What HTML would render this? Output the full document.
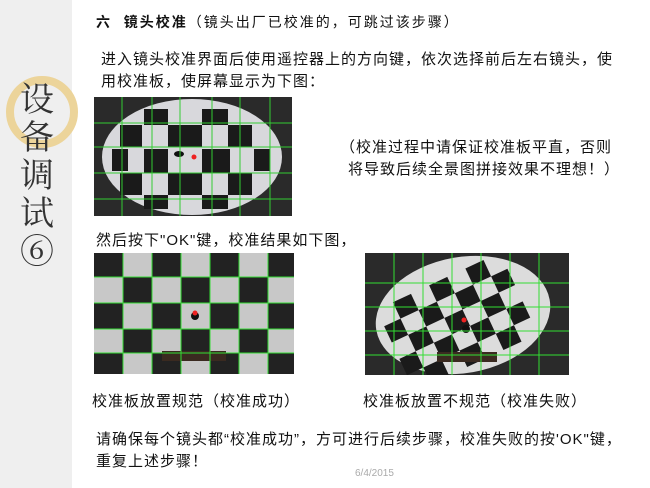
<!DOCTYPE html>
<html><head><meta charset="utf-8"><style>
body{margin:0;width:650px;height:488px;background:#fff;position:relative;overflow:hidden;font-family:"Liberation Sans","Noto Sans CJK SC",sans-serif;color:#111}
.side{position:absolute;left:0;top:0;width:72px;height:488px;background:#efefef}
.t{position:absolute;white-space:nowrap;font-size:15px;line-height:22px;letter-spacing:1px}
.v{position:absolute;left:17px;top:82px;width:40px;font-family:"Liberation Serif","Noto Serif CJK SC",serif;font-size:34px;line-height:38px;color:#333;text-align:center}
</style></head><body>
<div class="side"></div>
<svg style="position:absolute;left:0;top:0" width="80" height="160"><circle cx="42" cy="112" r="32" fill="none" stroke="#ecd49a" stroke-width="8"/></svg>
<div class="v">设<br>备<br>调<br>试<br>⑥</div>
<div class="t" style="left:96px;top:11px;font-size:14px;letter-spacing:2px"><b>六&nbsp; 镜头校准</b>（镜头出厂已校准的，可跳过该步骤）</div>
<div class="t" style="left:101px;top:49px">进入镜头校准界面后使用遥控器上的方向键，依次选择前后左右镜头，使</div>
<div class="t" style="left:101px;top:71px">用校准板，使屏幕显示为下图：</div>
<svg style="position:absolute;left:94px;top:97px" width="198" height="119">
<rect width="198" height="119" fill="#2a2a2a"/>
<ellipse cx="98" cy="60" rx="90" ry="58" fill="#d8d8dc"/>
<g fill="#1a1a1a">
<rect x="50" y="12" width="24" height="16"/><rect x="108" y="12" width="26" height="16"/>
<rect x="26" y="28" width="22" height="22"/><rect x="74" y="28" width="34" height="22"/><rect x="134" y="28" width="24" height="22"/>
<rect x="50" y="52" width="24" height="24"/><rect x="108" y="52" width="28" height="24"/><rect x="18" y="52" width="16" height="22"/><rect x="160" y="52" width="16" height="22"/>
<rect x="26" y="76" width="22" height="22"/><rect x="74" y="76" width="34" height="22"/><rect x="134" y="76" width="24" height="22"/>
<rect x="50" y="98" width="24" height="14"/><rect x="108" y="98" width="26" height="14"/>
</g>
<ellipse cx="85" cy="57" rx="5" ry="3" fill="#111"/><circle cx="100" cy="60" r="2.5" fill="#e22"/>
<g stroke="#3c3" stroke-width="1"><line x1="0" y1="26" x2="198" y2="26"/><line x1="0" y1="50" x2="198" y2="50"/><line x1="0" y1="76" x2="198" y2="76"/><line x1="0" y1="102" x2="198" y2="102"/>
<line x1="28" y1="0" x2="28" y2="119"/><line x1="58" y1="0" x2="58" y2="119"/><line x1="86" y1="0" x2="86" y2="119"/><line x1="118" y1="0" x2="118" y2="119"/><line x1="146" y1="0" x2="146" y2="119"/><line x1="176" y1="0" x2="176" y2="119"/></g></svg>
<div class="t" style="left:340px;top:137px">（校准过程中请保证校准板平直，否则</div>
<div class="t" style="left:348px;top:159px">将导致后续全景图拼接效果不理想！）</div>
<div class="t" style="left:96px;top:230px">然后按下"OK"键，校准结果如下图，</div>
<svg style="position:absolute;left:94px;top:253px" width="200" height="121">
<rect width="200" height="121" fill="#c8c8c8"/>
<g fill="#222">
<rect x="0" y="0" width="29" height="24"/><rect x="58" y="0" width="29" height="24"/><rect x="116" y="0" width="29" height="24"/><rect x="174" y="0" width="26" height="24"/>
<rect x="29" y="24" width="29" height="26"/><rect x="87" y="24" width="29" height="26"/><rect x="145" y="24" width="29" height="26"/>
<rect x="0" y="50" width="29" height="26"/><rect x="58" y="50" width="29" height="26"/><rect x="116" y="50" width="29" height="26"/><rect x="174" y="50" width="26" height="26"/>
<rect x="29" y="76" width="29" height="24"/><rect x="87" y="76" width="29" height="24"/><rect x="145" y="76" width="29" height="24"/>
<rect x="0" y="100" width="29" height="21"/><rect x="58" y="100" width="29" height="21"/><rect x="116" y="100" width="29" height="21"/><rect x="174" y="100" width="26" height="21"/>
</g>
<rect x="68" y="98" width="64" height="10" fill="#3a2a20"/>
<circle cx="101" cy="63" r="4" fill="#111"/><circle cx="101" cy="60" r="2.5" fill="#e22"/>
<g stroke="#3d3" stroke-width="1"><line x1="0" y1="24" x2="200" y2="24"/><line x1="0" y1="50" x2="200" y2="50"/><line x1="0" y1="76" x2="200" y2="76"/><line x1="0" y1="100" x2="200" y2="100"/>
<line x1="29" y1="0" x2="29" y2="121"/><line x1="58" y1="0" x2="58" y2="121"/><line x1="87" y1="0" x2="87" y2="121"/><line x1="116" y1="0" x2="116" y2="121"/><line x1="145" y1="0" x2="145" y2="121"/><line x1="174" y1="0" x2="174" y2="121"/></g></svg>
<svg style="position:absolute;left:365px;top:253px" width="204" height="122">
<rect width="204" height="122" fill="#2a2a2a"/>
<ellipse cx="98" cy="62" rx="88" ry="58" transform="rotate(-10 98 62)" fill="#dcdcdc"/>
<g fill="#1a1a1a" transform="rotate(-25 100 62)">
<rect x="40" y="20" width="20" height="18"/><rect x="80" y="20" width="20" height="18"/><rect x="120" y="20" width="20" height="18"/>
<rect x="60" y="38" width="20" height="18"/><rect x="100" y="38" width="20" height="18"/><rect x="140" y="38" width="18" height="18"/><rect x="22" y="38" width="18" height="18"/>
<rect x="40" y="56" width="20" height="18"/><rect x="80" y="56" width="20" height="18"/><rect x="120" y="56" width="20" height="18"/>
<rect x="60" y="74" width="20" height="18"/><rect x="100" y="74" width="20" height="18"/><rect x="22" y="74" width="18" height="18"/><rect x="140" y="74" width="18" height="18"/>
<rect x="40" y="92" width="20" height="18"/><rect x="80" y="92" width="20" height="18"/><rect x="120" y="92" width="20" height="18"/>
</g>
<rect x="72" y="99" width="60" height="10" fill="#3a2a20"/>
<circle cx="101" cy="76" r="4" fill="#111"/><circle cx="99" cy="67" r="2.5" fill="#e22"/>
<g stroke="#3d3" stroke-width="1"><line x1="0" y1="30" x2="204" y2="30"/><line x1="0" y1="54" x2="204" y2="54"/><line x1="0" y1="78" x2="204" y2="78"/><line x1="0" y1="102" x2="204" y2="102"/>
<line x1="29" y1="0" x2="29" y2="122"/><line x1="58" y1="0" x2="58" y2="122"/><line x1="87" y1="0" x2="87" y2="122"/><line x1="116" y1="0" x2="116" y2="122"/><line x1="145" y1="0" x2="145" y2="122"/><line x1="174" y1="0" x2="174" y2="122"/></g></svg>
<div class="t" style="left:92px;top:391px">校准板放置规范（校准成功）</div>
<div class="t" style="left:363px;top:391px">校准板放置不规范（校准失败）</div>
<div class="t" style="left:96px;top:429px">请确保每个镜头都“校准成功”，方可进行后续步骤，校准失败的按'OK"键，</div>
<div class="t" style="left:96px;top:451px">重复上述步骤！</div>
<div class="t" style="left:355px;top:463px;font-size:10px;color:#aaa;letter-spacing:0">6/4/2015</div>
</body></html>
